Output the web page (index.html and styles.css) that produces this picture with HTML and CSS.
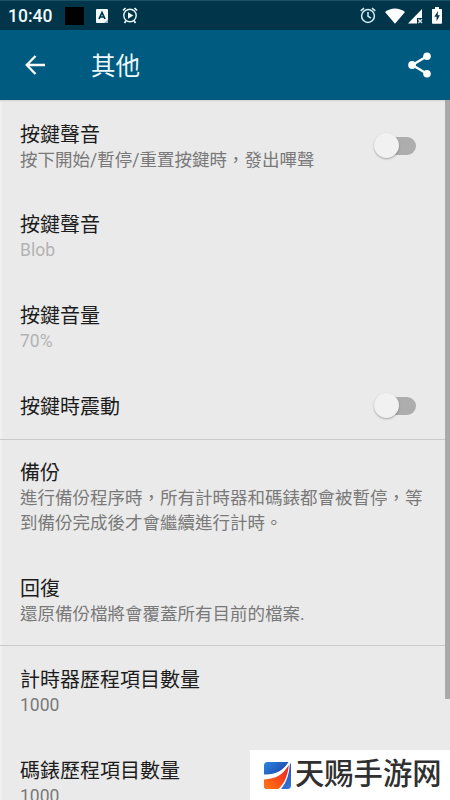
FILE: index.html
```html
<!DOCTYPE html>
<html lang="zh-Hant">
<head>
<meta charset="utf-8">
<title>其他</title>
<link rel="stylesheet" href="styles.css">
</head>
<body>
<div class="screen">
  <header class="status">
    <span class="clock">10:40</span>
    <span class="block"></span>
    <svg class="app-a" width="12" height="14" viewBox="0 0 12 14"><rect width="12" height="14" rx="1" fill="#f4fafc"/><path d="M3 10 6 3.5 9 10M4.2 8h3.6" fill="none" stroke="#00354a" stroke-width="1.7"/><path d="M8 14 12 10.5V14z" fill="#9fb3bd"/></svg>
    <svg class="app-alarm" width="16" height="17" viewBox="0 0 16 17" fill="none" stroke="#eef8fb"><circle cx="8" cy="8.5" r="6.2" stroke-width="1.4"/><path d="M1 3.5 3.5 1M15 3.5 12.5 1M2.5 16 4 13.8M13.5 16 12 13.8" stroke-width="1.7"/><path d="M6 5.3 11.3 8.5 6 11.7z" fill="#eef8fb" stroke="none"/></svg>
    <span class="spacer"></span>
    <svg class="alarm" width="16" height="17" viewBox="0 0 16 17" fill="none" stroke="#d9edf5" stroke-width="1.5"><circle cx="8" cy="9" r="6.4"/><path d="M.7 3.9 4 1.2M15.3 3.9 12 1.2M8 5v4.3l3 1.9"/></svg>
    <svg class="wifi" width="20" height="16" viewBox="0 0 20 16"><path d="M0 4C5.5-.8 14.500-.8 20 4L10 15.800z" fill="#fff"/></svg>
    <svg class="signal" width="15" height="15" viewBox="0 0 15 15"><path d="M14 0V9H9v5.500H0z" fill="#fff"/><path d="m10.300 10.300 3.700 3.700m0-3.700L10.300 14" stroke="#d5e9f2" stroke-width="1.300"/></svg>
    <svg class="battery" width="10" height="17" viewBox="0 0 10 17"><path d="M3 0h4v2h2.200a.8.8 0 0 1 .8.800V16a.8.8 0 0 1-.8.800H.8A.8.8 0 0 1 0 16V2.800A.8.800 0 0 1 .8 2H3z" fill="#fff"/><path d="M6 4 2.300 9.800h2.300V14.200L7.900 8.300H5.700z" fill="#00354a"/></svg>
  </header>
  <nav class="bar">
    <svg class="back" width="20" height="20" viewBox="0 0 20 20" fill="none" stroke="#fff" stroke-width="2.3"><path d="M20 10H1.800M10.500 1 1.700 10l8.800 9"/></svg>
    <h1>其他</h1>
    <svg class="share" width="24" height="26" viewBox="0 0 24 26"><path d="M19 4.200 4.300 13 19 21.700" fill="none" stroke="#fff" stroke-width="2.300"/><g fill="#fff"><circle cx="19" cy="4.200" r="3.800"/><circle cx="4.100" cy="13" r="3.900"/><circle cx="19" cy="21.700" r="3.800"/></g></svg>
  </nav>
  <main class="list">
    <section>
      <div class="row"><div><h2>按鍵聲音</h2><p>按下開始/暫停/重置按鍵時，發出嗶聲</p></div><span class="switch"></span></div>
      <div class="row off"><div><h2>按鍵聲音</h2><p>Blob</p></div></div>
      <div class="row off"><div><h2>按鍵音量</h2><p>70%</p></div></div>
      <div class="row single"><div><h2>按鍵時震動</h2></div><span class="switch"></span></div>
    </section>
    <section>
      <div class="row"><div><h2>備份</h2><p>進行備份程序時，所有計時器和碼錶都會被暫停，等<br>到備份完成後才會繼續進行計時。</p></div></div>
      <div class="row"><div><h2>回復</h2><p>還原備份檔將會覆蓋所有目前的檔案.</p></div></div>
    </section>
    <section>
      <div class="row"><div><h2>計時器歷程項目數量</h2><p>1000</p></div></div>
      <div class="row"><div><h2>碼錶歷程項目數量</h2><p>1000</p></div></div>
    </section>
    <span class="scrollbar"></span>
  </main>
  <aside class="mark" lang="zh-Hans">
    <svg width="27" height="27" viewBox="0 0 27 27">
      <defs>
        <linearGradient id="blue" x1="0" y1="0" x2="1" y2="1"><stop offset="0" stop-color="#2a86e0"/><stop offset=".5" stop-color="#2350b4"/><stop offset="1" stop-color="#3c78dc"/></linearGradient>
        <linearGradient id="fire" x1="0" y1="1" x2="1" y2="0"><stop offset="0" stop-color="#ff7a10"/><stop offset=".6" stop-color="#f8401c"/><stop offset="1" stop-color="#e02a2a"/></linearGradient>
      </defs>
      <rect width="27" height="27" rx="3.500" fill="url(#blue)"/>
      <path d="M0 12.500C11 13 19 9 24.500 0H26C25.500 11 23 20 17 27H3.500L0 23.500z" fill="#fff"/>
      <path d="M0 17.500C12 17 19 12.500 24.800 3 24 13 20.500 21.500 14.500 27H3.500A3.500 3.500 0 0 1 0 23.500z" fill="url(#fire)"/>
    </svg>
    <span>天赐手游网</span>
  </aside>
</div>
</body>
</html>
```

FILE: styles.css
```css
* { box-sizing: border-box; }
body { margin: 0; font-family: Roboto, "Noto Sans CJK TC", sans-serif; }
h1, h2, p { margin: 0; font-weight: 400; }
svg { display: block; flex: none; }

.screen {
  position: relative;
  display: flex;
  flex-direction: column;
  width: 450px;
  height: 800px;
  overflow: hidden;
  background: #eaeaea;
}

.status {
  display: flex;
  flex: none;
  align-items: center;
  height: 30px;
  padding: 0 8px;
  background: #00354a;
  border-top: 1px solid #1b5268;
}
.clock { width: 57px; color: #f2fafc; font-size: 17.5px; font-weight: 500; line-height: 30px; }
.block { width: 19px; height: 18px; background: #000; }
.app-a { margin-left: 12px; }
.app-alarm { margin-left: 14px; }
.spacer { flex: 1; }
.wifi { margin-left: 9px; }
.signal { margin: 1px 0 0 3px; }
.battery { margin-left: 9px; }

.bar {
  display: flex;
  flex: none;
  align-items: center;
  height: 70px;
  padding: 0 18px 0 25px;
  background: #005b80;
}
.bar h1 {
  flex: 1;
  margin-left: 46px;
  padding-top: 3px;
  color: #eefaff;
  font-size: 24.5px;
  line-height: 36px;
}

.list {
  position: relative;
  flex: 1;
  min-height: 0;
  overflow: hidden;
  background: linear-gradient(90deg, #f0f0f0 2px, transparent 2px);
  box-shadow: inset 0 3px 2px -2px #d0d0d0;
}
section + section { box-shadow: inset 0 1px #cacaca; }
.row {
  display: flex;
  justify-content: space-between;
  align-items: center;
  padding: 21.5px 27px 18.2px 20px;
}
.single { height: 66.9px; padding-top: 20.5px; }
h2 { color: #1c1c1c; font-size: 20px; line-height: 26px; white-space: nowrap; }
p { color: #797979; font-size: 17.5px; line-height: 25px; white-space: nowrap; }
.off p { color: #b3b3b3; }

.switch {
  position: relative;
  top: -1px;
  flex: none;
  width: 41px;
  height: 18px;
  margin-right: 7px;
  border-radius: 9px;
  background: linear-gradient(90deg, transparent 18px, #adadad 18px);
}
.switch::before {
  content: "";
  position: absolute;
  left: -1px;
  top: -4px;
  width: 25px;
  height: 25px;
  border-radius: 50%;
  background: #f1f1f1;
  box-shadow: 0 1px 2px rgba(0, 0, 0, .3);
}
.scrollbar {
  position: absolute;
  top: 0;
  right: 0;
  width: 5px;
  height: 599px;
  background: #a9a9a9;
}

.mark {
  position: absolute;
  right: 0;
  bottom: 0;
  display: flex;
  align-items: center;
  width: 200px;
  height: 50px;
  padding-left: 14px;
  background: #fff;
}
.mark span {
  margin: -8px 0 0 4px;
  color: #303030;
  font: 500 29.3px/42px "Noto Sans CJK SC", sans-serif;
  white-space: nowrap;
}
```
